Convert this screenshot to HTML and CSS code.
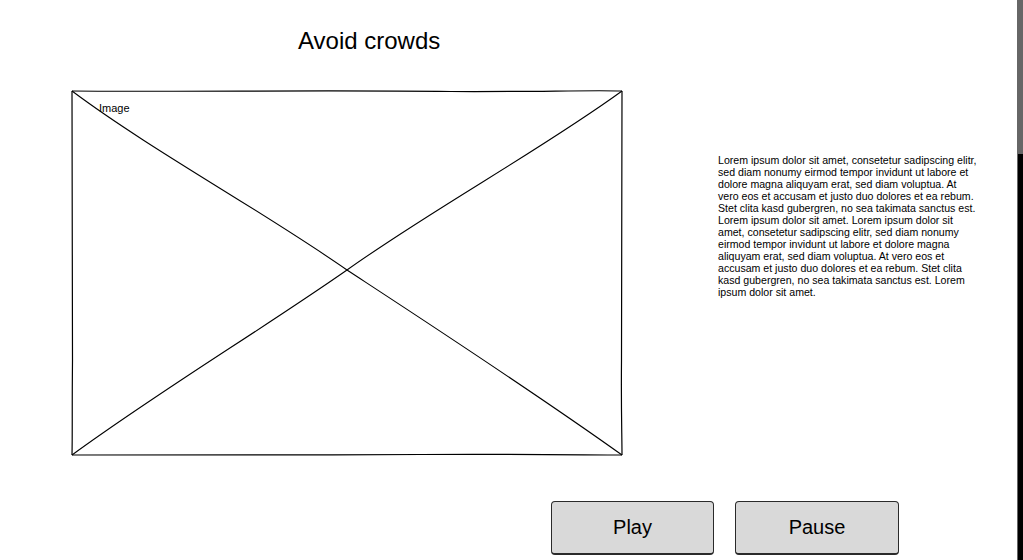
FILE: index.html
```html
<!DOCTYPE html>
<html lang="en">
<head>
<meta charset="utf-8">
<title>Avoid crowds</title>
<link rel="stylesheet" href="styles.css">
</head>
<body>
<div class="page">
  <h1 class="title">Avoid crowds</h1>
  <div class="main">
    <div class="image-box">
      <svg class="image-svg" width="552" height="366" viewBox="0 0 552 366">
        <path d="M1 1 C120 2 250 0 380 1.5 C460 2 520 0 551 1" fill="none" stroke="#000" stroke-width="1.2"/>
        <path d="M551 1 C550 90 551.5 180 550.5 270 C550 320 551 345 551 365" fill="none" stroke="#000" stroke-width="1.2"/>
        <path d="M1 365 C100 364 230 365.5 350 364.5 C450 364 520 365 551 365" fill="none" stroke="#000" stroke-width="1.2"/>
        <path d="M1 1 C1.5 90 0.5 180 1.5 270 C1 320 1.5 345 1 365" fill="none" stroke="#000" stroke-width="1.2"/>
        <path d="M1 1 C80 60 190 120 276 180 C360 235 460 300 551 365" fill="none" stroke="#000" stroke-width="1.1"/>
        <path d="M551 1 C470 60 360 120 276 180 C190 240 90 300 1 365" fill="none" stroke="#000" stroke-width="1.1"/>
      </svg>
      <span class="image-label">Image</span>
    </div>
    <p class="body-text">Lorem ipsum dolor sit amet, consetetur sadipscing elitr, sed diam nonumy eirmod tempor invidunt ut labore et dolore magna aliquyam erat, sed diam voluptua. At vero eos et accusam et justo duo dolores et ea rebum. Stet clita kasd gubergren, no sea takimata sanctus est. Lorem ipsum dolor sit amet. Lorem ipsum dolor sit amet, consetetur sadipscing elitr, sed diam nonumy eirmod tempor invidunt ut labore et dolore magna aliquyam erat, sed diam voluptua. At vero eos et accusam et justo duo dolores et ea rebum. Stet clita kasd gubergren, no sea takimata sanctus est. Lorem ipsum dolor sit amet.</p>
  </div>
  <div class="controls">
    <button class="btn btn-play">Play</button>
    <button class="btn btn-pause">Pause</button>
  </div>
</div>
<div class="edge"></div>
</body>
</html>
```

FILE: styles.css
```css
html, body {
  margin: 0;
  padding: 0;
  background: #fff;
  width: 1023px;
  height: 560px;
  overflow: hidden;
}

body {
  font-family: "Liberation Sans", Arial, sans-serif;
  color: #000;
  position: relative;
}

.page {
  display: flex;
  flex-direction: column;
}

.title {
  margin: 0;
  padding-top: 27px;
  padding-left: 298px;
  font-size: 24px;
  font-weight: normal;
  line-height: 28px;
  height: 28px;
}

.main {
  display: flex;
  align-items: flex-start;
  margin-top: 35px;
  padding-left: 71px;
}

.image-box {
  position: relative;
  width: 552px;
  height: 366px;
  flex: none;
}

.image-svg {
  display: block;
}

.image-label {
  position: absolute;
  left: 28px;
  top: 12px;
  font-size: 11px;
  line-height: 13px;
}

.body-text {
  margin: 64px 0 0 95px;
  width: 262px;
  flex: none;
  font-size: 10.6px;
  line-height: 12px;
}

.controls {
  display: flex;
  gap: 21px;
  margin-top: 45px;
  padding-left: 551px;
}

.btn {
  box-sizing: border-box;
  width: 163px;
  height: 54px;
  background: #d9d9d9;
  border: 1.5px solid #2a2a2a;
  border-bottom-width: 2px;
  border-radius: 4px;
  font-family: "Liberation Sans", Arial, sans-serif;
  font-size: 20px;
  color: #000;
  padding: 0;
}

.btn-pause {
  width: 164px;
}

.edge {
  position: absolute;
  top: 0;
  right: 0;
  width: 6px;
  height: 560px;
  background: linear-gradient(to bottom, #666 0, #666 154px, #000 154px);
  border-left: 1px solid #666;
  box-sizing: border-box;
}
```
